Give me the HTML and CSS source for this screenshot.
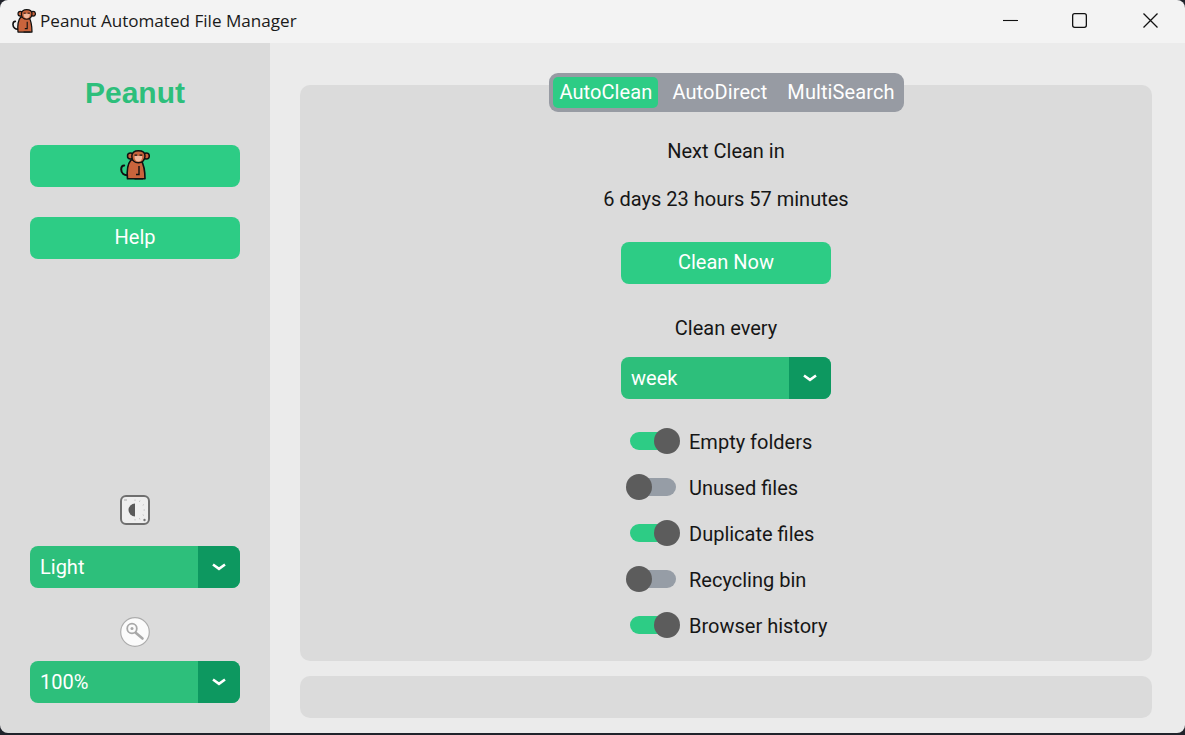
FILE: index.html
```html
<!DOCTYPE html>
<html lang="en">
<head>
<meta charset="utf-8">
<title>Peanut Automated File Manager</title>
<link rel="stylesheet" href="styles.css">
</head>
<body>
<svg class="defs" width="0" height="0" aria-hidden="true">
  <symbol id="monkey" viewBox="0 0 30 30">
    <path d="M9 25C4 26 1.200 23 1.200 19.500C1.200 17 2.500 15.500 4.200 15.500" fill="none" stroke="#111" stroke-width="2" stroke-linecap="round"/>
    <path d="M7.500 28.800C6.800 22 7.500 14 11 10L21 10C23.500 14 25 22 25 28.800Z" fill="#c9643c" stroke="#111" stroke-width="1.600" stroke-linejoin="round"/>
    <path d="M14.500 28.800H23M19 16V24.500H16" fill="none" stroke="#111" stroke-width="1.400"/>
    <circle cx="10.500" cy="6" r="3" fill="#c9643c" stroke="#111" stroke-width="1.500"/>
    <circle cx="26.300" cy="6" r="3" fill="#c9643c" stroke="#111" stroke-width="1.500"/>
    <path d="M11.800 6C11.800 2.500 14.500 .8 18.400 .8C22.300 .8 25 2.500 25 6C25 10 22.300 12.800 18.400 12.800C14.500 12.800 11.800 10 11.800 6Z" fill="#c9643c" stroke="#111" stroke-width="1.500"/>
    <path d="M14.500 6.500C15.500 5 17 5.500 18.400 6C19.800 5.500 21.300 5 22.300 6.500C22.300 9.500 20.700 11.500 18.400 11.500C16 11.500 14.500 9.500 14.500 6.500Z" fill="#f0b79b"/>
    <path d="M14.500 5.200H17.200M19.500 5.200H22.300" stroke="#111" stroke-width="1.200"/>
  </symbol>
</svg>
<div class="window">
  <header class="titlebar">
    <svg class="title-icon"><use href="#monkey"/></svg>
    <span class="title-text">Peanut Automated File Manager</span>
    <div class="controls">
      <div class="control"><svg width="15" height="15" viewBox="0 0 15 15"><path d="M0 7.500H15" stroke="#111" stroke-width="1.100"/></svg></div>
      <div class="control"><svg width="15" height="15" viewBox="0 0 15 15"><rect x=".65" y=".65" width="13.700" height="13.700" rx="2" fill="none" stroke="#111" stroke-width="1.300"/></svg></div>
      <div class="control"><svg width="15" height="15" viewBox="0 0 15 15"><path d="M.5 .5L14.500 14.500M14.500 .5L.5 14.500" stroke="#111" stroke-width="1.300"/></svg></div>
    </div>
  </header>
  <div class="body">
    <aside class="sidebar">
      <h1 class="brand">Peanut</h1>
      <div class="btn monkey-btn"><svg class="btn-icon"><use href="#monkey"/></svg></div>
      <div class="btn help-btn">Help</div>
      <div class="side-bottom">
        <svg class="pref-icon" viewBox="0 0 30 30">
          <rect x="1" y="1" width="28" height="28" rx="5" fill="#eeeeee" stroke="#6f6f6f" stroke-width="2"/>
          <path d="M15 8.500A6.500 6.500 0 0 0 15 21.500Z" fill="#5a5a5a"/>
          <path d="M15 4.500V6M20 5.500L19.300 7M24 9.500L22.700 10.300M25 15H23.500M24 20.500L22.700 19.700M20 24.500L19.300 23M15 25.500V24" stroke="#c4c4c4" stroke-width="1"/>
          <circle cx="24.500" cy="25" r="1.200" fill="#777"/>
          <path d="M4 5H7" stroke="#aaa" stroke-width="1"/>
        </svg>
        <div class="select side-select"><span class="select-label">Light</span><span class="select-arrow"><svg width="14" height="8" viewBox="0 0 14 8"><path d="M1 1.500L7 5.800L13 1.500" fill="none" stroke="#fff" stroke-width="2.600"/></svg></span></div>
        <svg class="pref-icon zoom-icon" viewBox="0 0 30 30">
          <circle cx="15" cy="15" r="14.300" fill="#fbfbfb" stroke="#adadad" stroke-width="1.200"/>
          <circle cx="12" cy="11.500" r="4.800" fill="none" stroke="#a8a8a8" stroke-width="1.800"/>
          <circle cx="12" cy="11.500" r="1.500" fill="#a8a8a8"/>
          <path d="M16 16L22.500 21.500" stroke="#a8a8a8" stroke-width="2.600" stroke-linecap="round"/>
        </svg>
        <div class="select side-select"><span class="select-label">100%</span><span class="select-arrow"><svg width="14" height="8" viewBox="0 0 14 8"><path d="M1 1.500L7 5.800L13 1.500" fill="none" stroke="#fff" stroke-width="2.600"/></svg></span></div>
      </div>
    </aside>
    <main class="main">
      <nav class="tabs">
        <span class="tab active">AutoClean</span>
        <span class="tab">AutoDirect</span>
        <span class="tab">MultiSearch</span>
      </nav>
      <section class="panel">
        <p class="line next">Next Clean in</p>
        <p class="line countdown">6 days 23 hours 57 minutes</p>
        <div class="btn clean-btn">Clean Now</div>
        <p class="line every">Clean every</p>
        <div class="select clean-select"><span class="select-label">week</span><span class="select-arrow"><svg width="14" height="8" viewBox="0 0 14 8"><path d="M1 1.500L7 5.800L13 1.500" fill="none" stroke="#fff" stroke-width="2.600"/></svg></span></div>
        <div class="toggles">
          <div class="toggle-row"><span class="switch on"><span class="knob"></span></span><span class="toggle-label">Empty folders</span></div>
          <div class="toggle-row"><span class="switch"><span class="knob"></span></span><span class="toggle-label">Unused files</span></div>
          <div class="toggle-row"><span class="switch on"><span class="knob"></span></span><span class="toggle-label">Duplicate files</span></div>
          <div class="toggle-row"><span class="switch"><span class="knob"></span></span><span class="toggle-label">Recycling bin</span></div>
          <div class="toggle-row"><span class="switch on"><span class="knob"></span></span><span class="toggle-label">Browser history</span></div>
        </div>
      </section>
      <div class="status"></div>
    </main>
  </div>
</div>
</body>
</html>
```
FILE: styles.css
```css
* {
  box-sizing: border-box;
}

html,
body {
  margin: 0;
  height: 100%;
  overflow: hidden;
  background: #20232b;
}

.defs {
  display: block;
  height: 0;
}

.window {
  width: 1185px;
  height: 733px;
  display: flex;
  flex-direction: column;
  border-radius: 8px;
  overflow: hidden;
  font-family: Roboto, sans-serif;
  font-size: 20px;
  color: #161616;
}

.titlebar {
  height: 43px;
  flex: none;
  display: flex;
  align-items: center;
  padding-left: 12px;
  background: #f3f3f3;
}

.title-icon {
  width: 24px;
  height: 24px;
  margin: -2px 4px 0 0;
}

.title-text {
  font-family: "Open Sans", sans-serif;
  font-size: 17.100px;
  color: #1a1a1a;
  margin-top: -2px;
}

.controls {
  margin-left: auto;
  display: flex;
}

.control {
  width: 70px;
  height: 43px;
  padding-bottom: 3px;
  display: flex;
  align-items: center;
  justify-content: center;
}

.control:nth-child(2) {
  padding-right: 1px;
}

.body {
  flex: 1;
  display: flex;
  min-height: 0;
}

.sidebar {
  width: 270px;
  flex: none;
  display: flex;
  flex-direction: column;
  padding: 0 30px 30px;
  background: #dbdbdb;
}

.brand {
  margin: 32px 0 1px;
  height: 36px;
  line-height: 36px;
  text-align: center;
  font-family: "Liberation Sans", sans-serif;
  font-size: 30px;
  font-weight: 700;
  color: #2dbf7b;
}

.btn {
  width: 210px;
  height: 42px;
  padding-bottom: 2px;
  display: flex;
  align-items: center;
  justify-content: center;
  border-radius: 8px;
  background: #2dcc85;
  color: #fff;
}

.monkey-btn {
  margin-top: 33px;
}

.btn-icon {
  width: 30px;
  height: 30px;
}

.help-btn {
  margin-top: 30px;
}

.side-bottom {
  margin-top: auto;
  display: flex;
  flex-direction: column;
  align-items: center;
}

.pref-icon {
  width: 30px;
  height: 30px;
}

.side-select {
  margin-top: 21px;
}

.zoom-icon {
  margin-top: 29px;
}

.zoom-icon + .side-select {
  margin-top: 14px;
}

.select {
  width: 210px;
  height: 42px;
  display: flex;
  border-radius: 8px;
  overflow: hidden;
  background: #2dbf7b;
  color: #fff;
}

.select-label {
  flex: 1;
  padding-left: 10px;
  line-height: 42px;
}

.select-arrow {
  width: 42px;
  display: flex;
  align-items: center;
  justify-content: center;
  background: #0d9860;
}

.main {
  flex: 1;
  min-width: 0;
  display: flex;
  flex-direction: column;
  align-items: center;
  padding: 30px 33px 15px 30px;
  background: #ebebeb;
}

.tabs {
  position: relative;
  z-index: 1;
  margin: 0 0 -27px 1px;
  height: 39px;
  display: flex;
  align-items: center;
  padding: 0 4px;
  border-radius: 9px;
  background: #979ba3;
  color: #fff;
  letter-spacing: .1px;
}

.tab {
  height: 31px;
  line-height: 30px;
  padding: 0 6px;
  margin-right: 8px;
  border-radius: 5px;
}

.tab:last-child {
  margin-right: 0;
  padding-right: 5px;
}

.tab.active {
  background: #2dcc85;
}

.panel {
  width: 852px;
  height: 576px;
  display: flex;
  flex-direction: column;
  align-items: center;
  border-radius: 10px;
  background: #dbdbdb;
}

.line {
  margin: 0;
  height: 24px;
  line-height: 24px;
}

.next {
  margin-top: 54px;
}

.countdown {
  margin-top: 24px;
}

.clean-btn {
  margin-top: 31px;
}

.every {
  margin-top: 32px;
}

.clean-select {
  margin-top: 17px;
}

.toggles {
  width: 210px;
  margin-top: 20px;
  padding-left: 5px;
}

.toggle-row {
  height: 46px;
  display: flex;
  align-items: center;
}

.switch {
  position: relative;
  width: 46px;
  height: 18px;
  margin: -2px 13px 0 4px;
  border-radius: 9px;
  background: #969da6;
}

.switch.on {
  background: #2dcc85;
}

.knob {
  position: absolute;
  top: -4px;
  left: -4px;
  width: 26px;
  height: 26px;
  border-radius: 50%;
  background: #5c5c5c;
}

.on .knob {
  left: 24px;
}

.toggle-label {
  white-space: nowrap;
}

.status {
  width: 852px;
  height: 42px;
  margin-top: 15px;
  border-radius: 10px;
  background: #dbdbdb;
}
```
